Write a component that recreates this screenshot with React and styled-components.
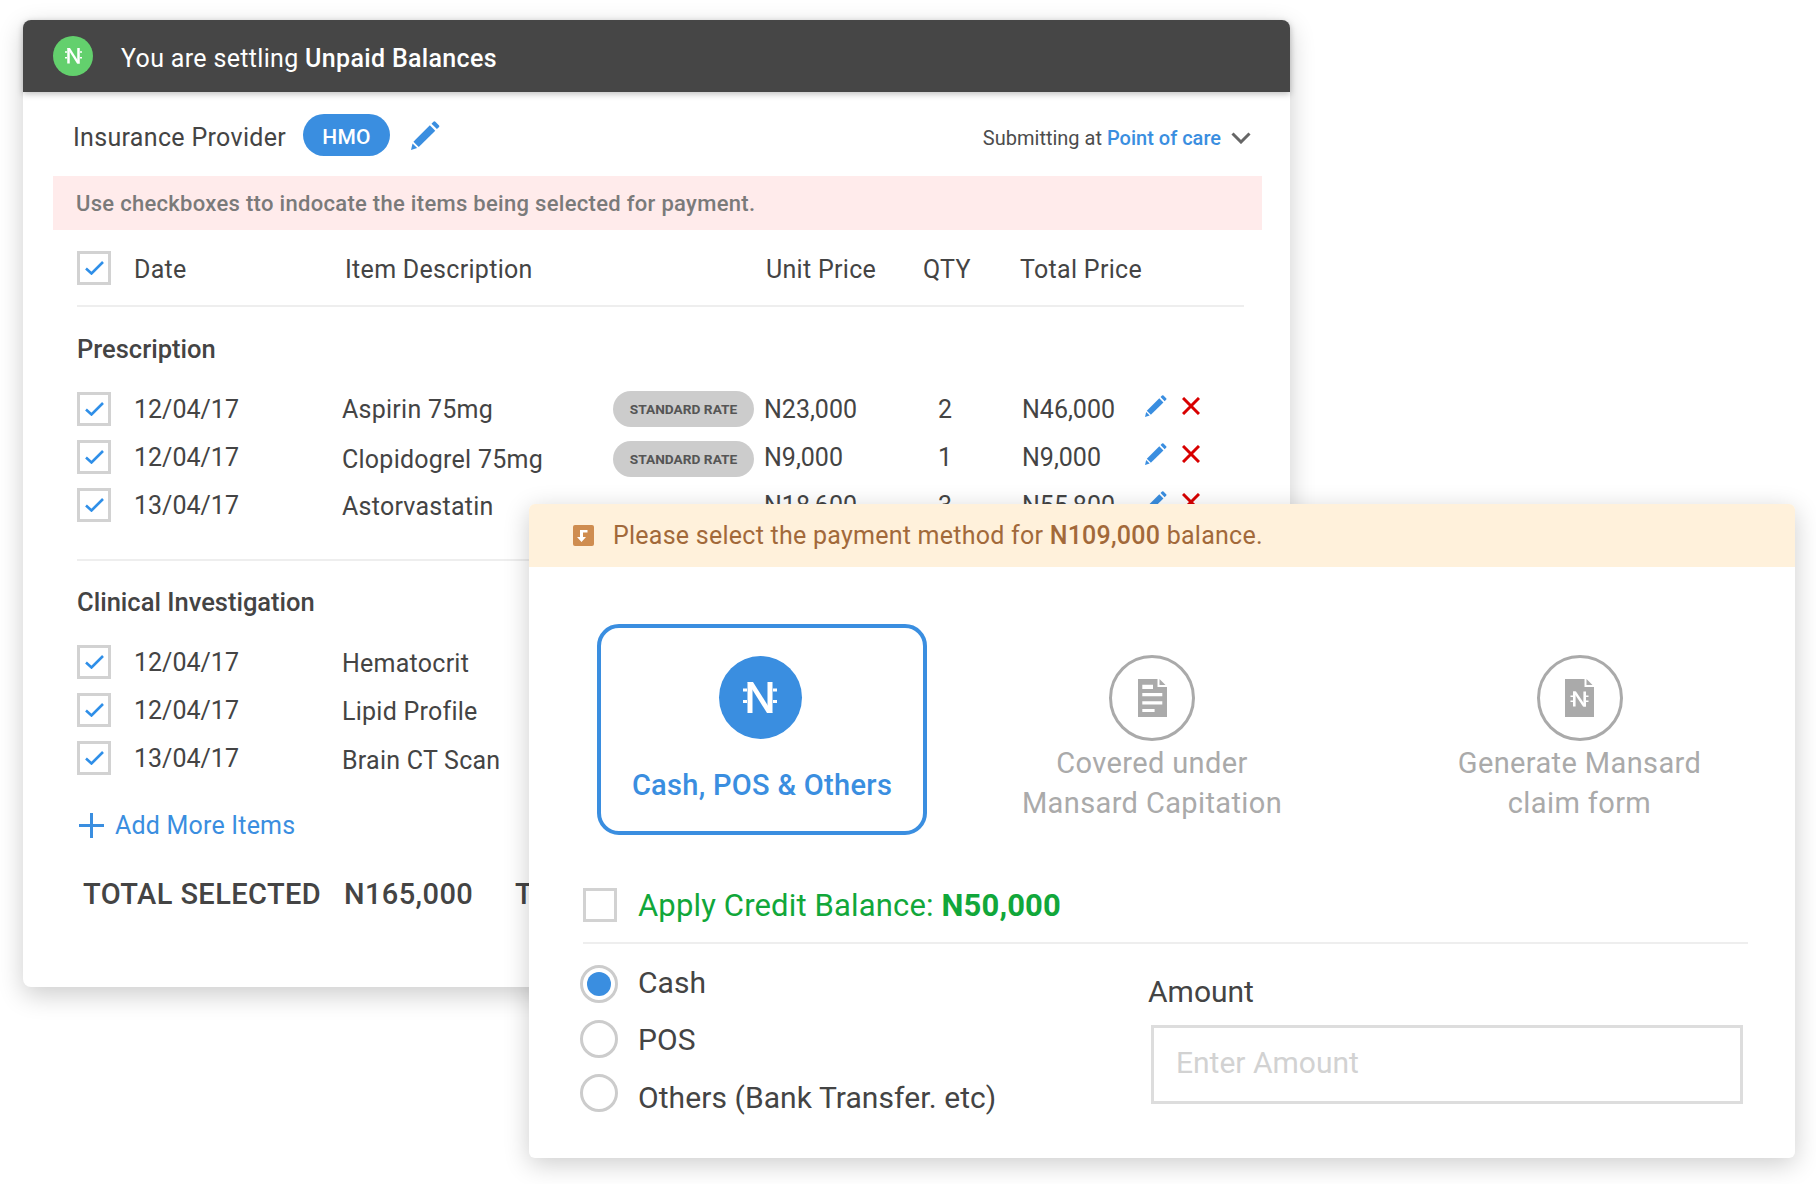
import React from "react";
import styled, { createGlobalStyle } from "styled-components";

const Global = createGlobalStyle`
  * { box-sizing: border-box; }
  html, body { margin: 0; padding: 0; background: #fff; }
  body { font-family: Roboto, "Liberation Sans", sans-serif; color: #444; }
`;

const BLUE = "#3a8ee0";

const Page = styled.div`
  position: relative;
  width: 1816px;
  height: 1184px;
  padding: 20px 0 0 23px;
  overflow: hidden;
`;

const Card = styled.div`
  width: 1267px;
  height: 967px;
  background: #fff;
  border-radius: 8px;
  box-shadow: 0 8px 26px rgba(0, 0, 0, 0.2);
`;

const TopBar = styled.div`
  display: flex;
  align-items: center;
  height: 72px;
  padding-left: 30px;
  gap: 28px;
  background: #464646;
  border-radius: 8px 8px 0 0;
  box-shadow: 0 2px 6px rgba(0, 0, 0, 0.25);
  color: #fff;
  font-size: 25px;
  letter-spacing: 0.33px;
`;

const TopTitle = styled.span`
  margin-top: 4px;
`;

const GreenDot = styled.div`
  width: 40px;
  height: 40px;
  border-radius: 50%;
  background: #63d06d;
  display: flex;
  align-items: center;
  justify-content: center;
`;

const Strong = styled.b`
  font-weight: 500;
`;

const ProviderRow = styled.div`
  display: flex;
  align-items: center;
  height: 84px;
  padding: 6px 39px 0 50px;
  font-size: 25px;
  letter-spacing: 0.32px;
`;

const Hmo = styled.span`
  width: 87px;
  height: 42px;
  margin: 0 0 4px 17px;
  padding-top: 3px;
  border-radius: 21px;
  background: ${BLUE};
  color: #fff;
  font-size: 21px;
  font-weight: 500;
  display: flex;
  align-items: center;
  justify-content: center;
`;

const PenSlot = styled.span`
  display: flex;
  margin: 0 0 4px 21px;
`;

const Submitting = styled.div`
  margin: 2px 0 0 auto;
  display: flex;
  align-items: center;
  font-size: 20px;
  letter-spacing: 0;
  color: #4c4c4c;
  gap: 10px;
`;

const BlueText = styled.span`
  color: ${BLUE};
  font-weight: 500;
`;

const Notice = styled.div`
  height: 54px;
  margin: 0 28px 0 30px;
  padding-left: 23px;
  display: flex;
  align-items: center;
  background: #ffebeb;
  color: #7a7a7a;
  font-size: 22px;
  font-weight: 500;
  letter-spacing: 0.3px;
`;

const Table = styled.div`
  padding: 0 46px 0 54px;
`;

const HeadRow = styled.div`
  display: grid;
  grid-template-columns: 57px 211px 421px 157px 97px auto;
  align-items: center;
  height: 77px;
  border-bottom: 2px solid #eee;
  font-size: 25px;
  letter-spacing: 0.3px;
`;

const HeadCell = styled.span`
  margin-top: 4px;
`;

const SectionTitle = styled.div`
  height: 30px;
  line-height: 30px;
  margin-top: ${({ $top }) => $top}px;
  margin-bottom: 21px;
  font-size: 25.5px;
  font-weight: 500;
`;

const ItemRow = styled.div`
  display: grid;
  grid-template-columns: 57px 208px 271px 151px 174px 84px 123px 37px auto;
  align-items: center;
  height: 48px;
  font-size: 25px;
`;

const ItemName = styled.span`
  letter-spacing: 0.25px;
  margin-top: ${({ $drop }) => $drop * 2}px;
`;

const Section = styled.div`
  border-bottom: 2px solid #eee;
  padding-bottom: 30px;
`;

const Box = styled.span`
  width: 34px;
  height: 34px;
  border: 3px solid #d2d2d2;
  display: flex;
  align-items: center;
  justify-content: center;
`;

const RatePill = styled.span`
  width: 141px;
  height: 36px;
  margin-top: ${({ $drop }) => $drop * 2}px;
  border-radius: 18px;
  background: #ccc;
  color: #555;
  font-size: 13.7px;
  font-weight: 700;
  display: flex;
  align-items: center;
  justify-content: center;
`;

const ActionSlot = styled.span`
  display: flex;
  margin-bottom: 6px;
`;

const AddMore = styled.div`
  display: flex;
  align-items: center;
  gap: 11px;
  height: 30px;
  margin: 28px 0 0 2px;
  color: ${BLUE};
  font-size: 25px;
  letter-spacing: 0.2px;
`;

const Totals = styled.div`
  display: grid;
  grid-template-columns: 261px 171px auto;
  margin: 39px 0 0 6px;
  font-size: 29px;
  line-height: 30px;
  font-weight: 500;
  letter-spacing: 0.4px;
  white-space: nowrap;
`;

const Modal = styled.div`
  position: absolute;
  left: 529px;
  top: 504px;
  width: 1266px;
  height: 654px;
  background: #fff;
  border-radius: 6px;
  box-shadow: 0 6px 26px rgba(0, 0, 0, 0.2);
`;

const Band = styled.div`
  height: 63px;
  display: flex;
  align-items: center;
  gap: 19px;
  padding-left: 44px;
  background: #fff1db;
  border-radius: 6px 6px 0 0;
  color: #a2693a;
  font-size: 25px;
  letter-spacing: 0.25px;
`;

const Options = styled.div`
  display: grid;
  grid-template-columns: 330px 450px 405px;
  margin: 57px 0 0 68px;
  height: 211px;
`;

const Selected = styled.div`
  border: 4px solid ${BLUE};
  border-radius: 22px;
  display: flex;
  flex-direction: column;
  align-items: center;
  padding-top: 28px;
  color: ${BLUE};
  font-size: 29px;
  font-weight: 500;
  letter-spacing: 0.3px;
`;

const BlueDisc = styled.div`
  width: 83px;
  height: 83px;
  margin: 0 4px 29px 0;
  border-radius: 50%;
  background: ${BLUE};
  display: flex;
  align-items: center;
  justify-content: center;
`;

const Option = styled.div`
  display: flex;
  flex-direction: column;
  align-items: center;
  padding-top: 31px;
  color: #aaa;
  font-size: 29px;
  line-height: 40px;
  letter-spacing: 0.38px;
  text-align: center;
`;

const Ring = styled.div`
  width: 86px;
  height: 86px;
  border-radius: 50%;
  border: 3px solid #aaa;
  margin-bottom: 2px;
  display: flex;
  align-items: center;
  justify-content: center;
`;

const CreditRow = styled.div`
  display: flex;
  align-items: center;
  gap: 21px;
  height: 56px;
  margin: 53px 47px 0 54px;
  padding-bottom: 20px;
  border-bottom: 2px solid #eee;
  color: #11a73a;
  font-size: 31px;
  letter-spacing: 0.15px;
`;

const CreditAmount = styled.b`
  font-weight: 700;
`;

const Lower = styled.div`
  display: grid;
  grid-template-columns: 568px 1fr;
  margin: 21px 0 0 51px;
`;

const Radios = styled.div`
  display: flex;
  flex-direction: column;
  gap: 16.5px;
`;

const RadioRow = styled.div`
  display: flex;
  align-items: center;
  gap: 20px;
  height: 38px;
  font-size: 30px;
  letter-spacing: 0.08px;
`;

const RadioLabel = styled.span`
  margin-top: ${({ $drop }) => $drop}px;
`;

const Radio = styled.span`
  width: 38px;
  height: 38px;
  border-radius: 50%;
  border: 3px solid #ccc;
  display: flex;
  align-items: center;
  justify-content: center;
  &::after {
    content: "";
    display: ${({ $on }) => ($on ? "block" : "none")};
    width: 24px;
    height: 24px;
    border-radius: 50%;
    background: ${BLUE};
  }
`;

const AmountCol = styled.div`
  padding-top: 11px;
`;

const AmountLabel = styled.div`
  font-size: 30px;
  line-height: 32px;
  margin-bottom: 17px;
`;

const AmountInput = styled.div`
  width: 592px;
  height: 79px;
  margin-left: 3px;
  border: 3px solid #ddd;
  padding: 0 0 4px 22px;
  display: flex;
  align-items: center;
  color: #d2d2d2;
  font-size: 30px;
`;

const Naira = ({ width, color }) => (
  <svg width={width} viewBox="0 0 34 31" fill={color}>
    <path d="M4.5 0h5v31h-5zM24.5 0h5v31h-5z" />
    <path d="M4.5 0H10l19.5 31H24z" />
    <path d="M0 6.5h4v3H0zM0 18h4v3H0zM30 6.5h4v3h-4zM30 18h4v3h-4z" />
  </svg>
);

const Pen = ({ size }) => (
  <svg width={size} height={size} viewBox="0 0 30 30" fill={BLUE}>
    <path d="M2.5 21.5L19.5 4.5l5.6 5.6L8 27z" />
    <path d="M21.2 2.8L23.2.8a1.4 1.4 0 012 0l3.6 3.6a1.4 1.4 0 010 2l-2 2z" />
    <path d="M1.6 23.2L6.4 28 0 30z" />
  </svg>
);

const Cross = () => (
  <svg width="18" height="18" viewBox="0 0 18 18" stroke="#d80000" strokeWidth="3" fill="none">
    <path d="M1 1l16 16M17 1L1 17" />
  </svg>
);

const Check = () => (
  <svg width="19" height="14" viewBox="0 0 19 14" fill="none" stroke="#2f8fe8" strokeWidth="2.6">
    <path d="M1 7.5l5.5 5L18 1" />
  </svg>
);

const Tick = () => (
  <Box>
    <Check />
  </Box>
);

const Chevron = () => (
  <svg width="20" height="12" viewBox="0 0 20 12" fill="none" stroke="#666" strokeWidth="3">
    <path d="M1.5 1.5L10 10l8.5-8.5" />
  </svg>
);

const Plus = () => (
  <svg width="25" height="25" viewBox="0 0 25 25" stroke={BLUE} strokeWidth="3">
    <path d="M12.5 0v25M0 12.5h25" />
  </svg>
);

const BandIcon = () => (
  <svg width="21" height="21" viewBox="0 0 21 21">
    <rect width="21" height="21" rx="2" fill="#cf8d50" />
    <path d="M7 5h7.5v2.4H10V12h3l-4.5 5L4 12h3z" fill="#fff" />
  </svg>
);

const DocLines = () => (
  <svg width="29" height="38" viewBox="0 0 29 38">
    <path d="M0 0h19.5v8H29v30H0z" fill="#aaa" />
    <path d="M21.5 0l6 6h-6z" fill="#aaa" />
    <path d="M4.3 5.7H15V10H4.3zM4.3 14h20v3.3h-20zM4.3 22.3h20v3.3h-20zM4.3 30h12.3v3H4.3z" fill="#fff" />
  </svg>
);

const DocNaira = () => (
  <svg width="29" height="38" viewBox="0 0 29 38">
    <path d="M0 0h19.5v8H29v30H0z" fill="#aaa" />
    <path d="M21.5 0l6 6h-6z" fill="#aaa" />
    <g fill="#fff">
      <path d="M8 12.5h2.6v15H8zM18.4 12.5H21v15h-2.6z" />
      <path d="M8 12.5h3l10 15h-3z" />
      <path d="M5.5 16.5H8v1.6H5.5zM5.5 21.5H8v1.6H5.5zM21 16.5h2.5v1.6H21zM21 21.5h2.5v1.6H21z" />
    </g>
  </svg>
);

const prescriptions = [
  { date: "12/04/17", name: "Aspirin 75mg", drop: 0, rate: true, unit: "N23,000", qty: "2", total: "N46,000" },
  { date: "12/04/17", name: "Clopidogrel 75mg", drop: 2, rate: true, unit: "N9,000", qty: "1", total: "N9,000" },
  { date: "13/04/17", name: "Astorvastatin", drop: 1, unit: "N18,600", qty: "3", total: "N55,800" },
];

const investigations = [
  { date: "12/04/17", name: "Hematocrit", drop: 1 },
  { date: "12/04/17", name: "Lipid Profile", drop: 1 },
  { date: "13/04/17", name: "Brain CT Scan", drop: 2 },
];

const Row = ({ item }) => (
  <ItemRow>
    <Tick />
    <span>{item.date}</span>
    <ItemName $drop={item.drop}>{item.name}</ItemName>
    {item.rate ? <RatePill $drop={item.drop}>STANDARD RATE</RatePill> : <span />}
    <span>{item.unit}</span>
    <span>{item.qty}</span>
    <span>{item.total}</span>
    {item.unit && (
      <ActionSlot>
        <Pen size={22} />
      </ActionSlot>
    )}
    {item.unit && (
      <ActionSlot>
        <Cross />
      </ActionSlot>
    )}
  </ItemRow>
);

export default function App() {
  return (
    <Page>
      <Global />
      <Card>
        <TopBar>
          <GreenDot>
            <Naira width={17} color="#fff" />
          </GreenDot>
          <TopTitle>
            You are settling <Strong>Unpaid Balances</Strong>
          </TopTitle>
        </TopBar>
        <ProviderRow>
          <span>Insurance Provider</span>
          <Hmo>HMO</Hmo>
          <PenSlot>
            <Pen size={29} />
          </PenSlot>
          <Submitting>
            <span>
              Submitting at <BlueText>Point of care</BlueText>
            </span>
            <Chevron />
          </Submitting>
        </ProviderRow>
        <Notice>Use checkboxes tto indocate the items being selected for payment.</Notice>
        <Table>
          <HeadRow>
            <Tick />
            <HeadCell>Date</HeadCell>
            <HeadCell>Item Description</HeadCell>
            <HeadCell>Unit Price</HeadCell>
            <HeadCell>QTY</HeadCell>
            <HeadCell>Total Price</HeadCell>
          </HeadRow>
          <Section>
            <SectionTitle $top={27}>Prescription</SectionTitle>
            {prescriptions.map((item) => (
              <Row key={item.name} item={item} />
            ))}
          </Section>
          <SectionTitle $top={26}>Clinical Investigation</SectionTitle>
          {investigations.map((item) => (
            <Row key={item.name} item={item} />
          ))}
          <AddMore>
            <Plus />
            Add More Items
          </AddMore>
          <Totals>
            <span>TOTAL SELECTED</span>
            <span>N165,000</span>
            <span>TOTAL</span>
          </Totals>
        </Table>
      </Card>

      <Modal>
        <Band>
          <BandIcon />
          <span>
            Please select the payment method for <Strong>N109,000</Strong> balance.
          </span>
        </Band>
        <Options>
          <Selected>
            <BlueDisc>
              <Naira width={34} color="#fff" />
            </BlueDisc>
            Cash, POS &amp; Others
          </Selected>
          <Option>
            <Ring>
              <DocLines />
            </Ring>
            Covered under
            <br />
            Mansard Capitation
          </Option>
          <Option>
            <Ring>
              <DocNaira />
            </Ring>
            Generate Mansard
            <br />
            claim form
          </Option>
        </Options>
        <CreditRow>
          <Box />
          <span>
            Apply Credit Balance: <CreditAmount>N50,000</CreditAmount>
          </span>
        </CreditRow>
        <Lower>
          <Radios>
            <RadioRow>
              <Radio $on />
              <RadioLabel $drop={-4}>Cash</RadioLabel>
            </RadioRow>
            <RadioRow>
              <Radio />
              <RadioLabel $drop={2}>POS</RadioLabel>
            </RadioRow>
            <RadioRow>
              <Radio />
              <RadioLabel $drop={8}>Others (Bank Transfer. etc)</RadioLabel>
            </RadioRow>
          </Radios>
          <AmountCol>
            <AmountLabel>Amount</AmountLabel>
            <AmountInput>Enter Amount</AmountInput>
          </AmountCol>
        </Lower>
      </Modal>
    </Page>
  );
}
